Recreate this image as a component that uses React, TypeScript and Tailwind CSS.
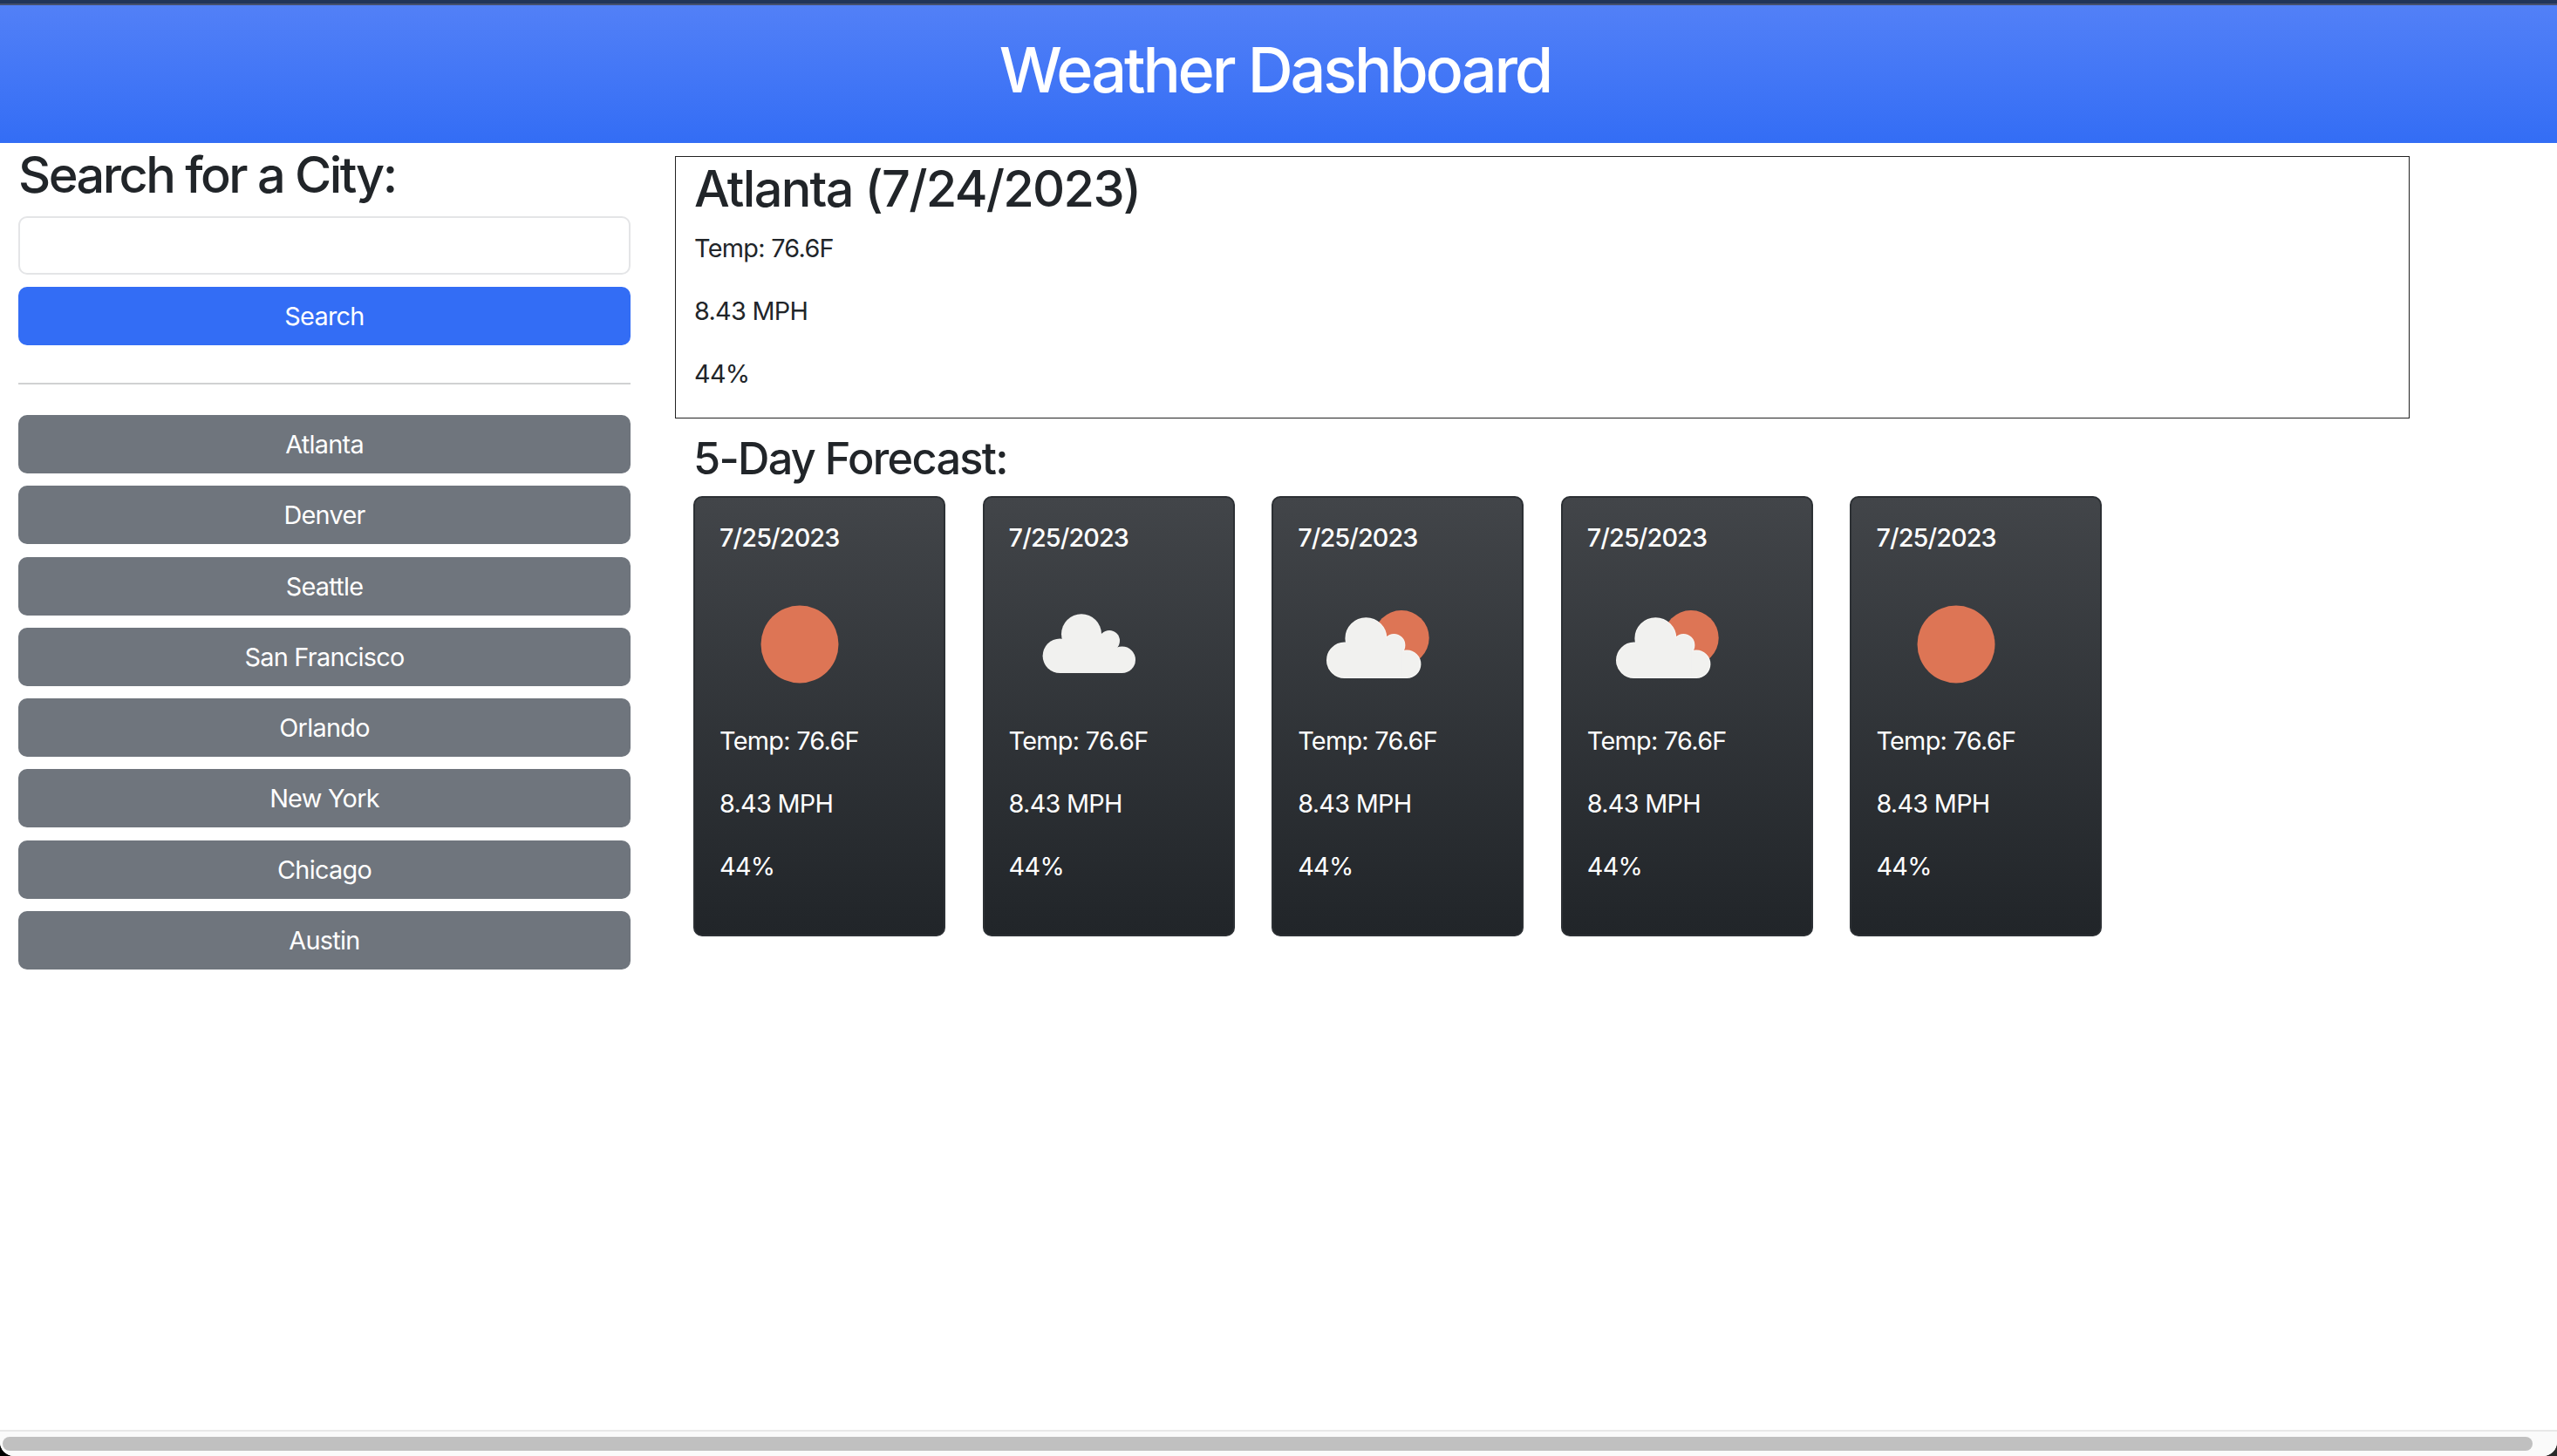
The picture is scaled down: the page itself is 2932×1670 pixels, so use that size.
import React from 'react';

const cities = ['Atlanta', 'Denver', 'Seattle', 'San Francisco', 'Orlando', 'New York', 'Chicago', 'Austin'];

const ORANGE = '#dd7555';
const CLOUD = '#f1f1ef';

const Lobes = ({ dx = 0, dy = 0, stroke }: { dx?: number; dy?: number; stroke?: string }) => (
  <g fill={stroke || CLOUD} stroke={stroke} strokeWidth={stroke ? 2 : 0} transform={`translate(${dx} ${dy})`}>
    <circle cx="56.3" cy="104.3" r="19.7" />
    <circle cx="81" cy="79.3" r="23" />
    <circle cx="113" cy="87" r="12" />
    <circle cx="127.7" cy="108.7" r="15.3" />
    <rect x="56.3" y="96" width="71.4" height="28" />
    <rect x="95" y="88" width="27" height="36" />
  </g>
);

const WeatherIcon = ({ kind }: { kind: 'sun' | 'cloud' | 'mixed' }) => (
  <svg width="180" height="180" viewBox="0 0 180 180" className="block ml-[2px]">
    {kind === 'sun' && <circle cx="90" cy="91" r="44.5" fill={ORANGE} />}
    {kind === 'cloud' && <Lobes />}
    {kind === 'mixed' && (
      <>
        <circle cx="117" cy="83.7" r="31.7" fill={ORANGE} />
        <Lobes dx={-4.6} dy={5} stroke="#f7f7f5" />
        <Lobes dx={-4.6} dy={5} />
      </>
    )}
  </svg>
);

const forecast: ('sun' | 'cloud' | 'mixed')[] = ['sun', 'cloud', 'mixed', 'mixed', 'sun'];

export default function App() {
  return (
    <div className="h-[1670px] bg-gradient-to-r from-black to-[#2a2a2a] overflow-hidden font-['Inter',sans-serif] text-[28.8px] leading-[43px] text-[#212529] tracking-[-0.7px]">
      <div className="h-full flex flex-col bg-white rounded-b-[16px] overflow-hidden">
        <div className="h-[4px] bg-[#213559]" />
        <div className="h-[2px] bg-[#45506e]" />
        <header className="h-[158px] pb-[10px] flex items-center justify-center bg-gradient-to-b from-[#5280f7] to-[#336df5]">
          <h1 className="text-[72px] leading-[86px] font-medium text-white tracking-[-3.1px] mr-[8px]">Weather Dashboard</h1>
        </header>

        <div className="flex flex-1">
          <aside className="w-[702px] ml-[21px] pt-[2px]">
            <h2 className="text-[57.6px] leading-[69px] font-medium tracking-[-2.5px] mb-[13px]">Search for a City:</h2>
            <input className="block w-full h-[67px] border-2 border-[#e4e5e7] rounded-[10px] bg-white mb-[14px]" />
            <button className="block w-full h-[67px] rounded-[10px] bg-[#336df5] text-white">Search</button>
            <hr className="mt-[43px] mb-[35px] border-0 h-[2px] bg-[#d0d1d2]" />
            <div className="flex flex-col gap-[14.3px]">
              {cities.map(c => (
                <button key={c} className="block w-full h-[67px] rounded-[10px] bg-[#6f757d] text-white">{c}</button>
              ))}
            </div>
          </aside>

          <main className="w-[1989px] ml-[51px] pt-[15px]">
            <div className="h-[301px] border border-[#222] px-[21px] pt-[2px]">
              <h2 className="text-[57.6px] leading-[69px] font-medium tracking-[-1.7px] mb-[12px]">Atlanta (7/24/2023)</h2>
              <p className="mb-[29px]">Temp: 76.6F</p>
              <p className="mb-[29px]">8.43 MPH</p>
              <p>44%</p>
            </div>
            <h3 className="text-[50.4px] leading-[60px] font-medium tracking-[-1.7px] ml-[21px] mt-[16px] mb-[13px]">5-Day Forecast:</h3>
            <div className="flex gap-[42.6px] ml-[21px]">
              {forecast.map((kind, i) => (
                <div key={i} className="w-[289px] h-[505px] rounded-[10px] border-2 border-[#2c3034] bg-gradient-to-b from-[#424549] to-[#212529] text-white px-[28px] pt-[24px]">
                  <div className="font-medium tracking-[-0.9px] mb-[10px]">7/25/2023</div>
                  <WeatherIcon kind={kind} />
                  <p className="mb-[29px]">Temp: 76.6F</p>
                  <p className="mb-[29px]">8.43 MPH</p>
                  <p>44%</p>
                </div>
              ))}
            </div>
          </main>
        </div>

        <div className="h-[30px] border-t-2 border-[#e8e8e8] bg-[#fafafa] pt-[6px] pl-[3px] pr-[28px]">
          <div className="h-[16px] rounded-full bg-[#c0c0c0]" />
        </div>
      </div>
    </div>
  );
}
